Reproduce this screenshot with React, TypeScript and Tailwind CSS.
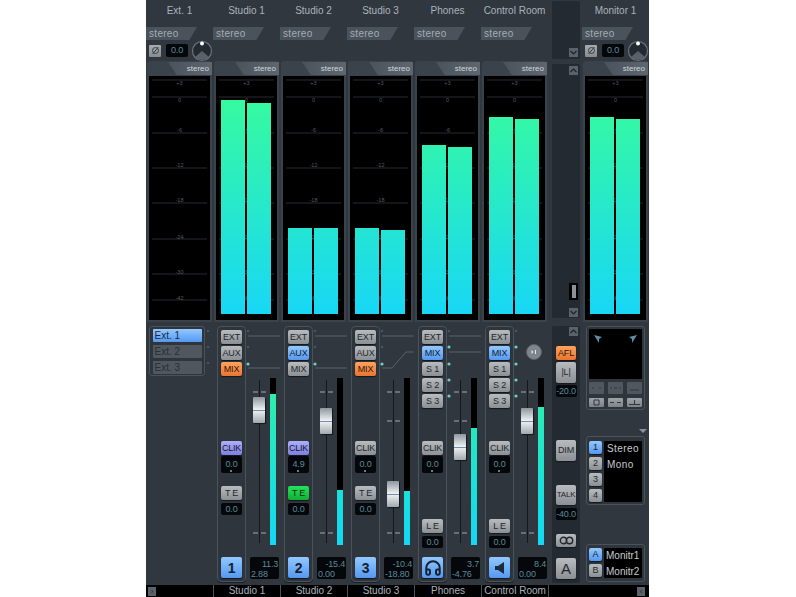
import { Headphones } from "lucide-react";
import type { ReactNode } from "react";

const FONT = "font-['Liberation_Sans',Arial,sans-serif]";

type Tone = "gray" | "blue" | "orange" | "violet" | "green" | "dim";

const tones: Record<Tone, string> = {
  gray: "bg-gradient-to-b from-[#b9bcbf] to-[#8b9094] text-[#23272b]",
  blue: "bg-gradient-to-b from-[#93c8ff] to-[#5498f0] text-[#14202e]",
  orange: "bg-gradient-to-b from-[#ffa25c] to-[#ea7430] text-[#2a1608]",
  violet: "bg-gradient-to-b from-[#adb0fa] to-[#7d80de] text-[#14142e]",
  green: "bg-gradient-to-b from-[#26e35c] to-[#10ae34] text-[#07300f]",
  dim: "bg-[#50575f] text-[#23282d]",
};

function Btn({ tone = "gray", className = "w-[21px] h-[14px]", children }: { tone?: Tone; className?: string; children?: ReactNode }) {
  return (
    <div className={`${tones[tone]} ${className} rounded-[2px] shadow-[0_1px_1px_#14181c] flex items-center justify-center text-[9px] leading-none tracking-[-0.2px] whitespace-nowrap`}>
      {children}
    </div>
  );
}

function Readout({ className = "w-[21px] h-[12px]", children }: { className?: string; children?: ReactNode }) {
  return (
    <div className={`${className} bg-[#05070a] rounded-[2px] text-[#5a8a9a] text-[9px] leading-none tracking-[-0.2px] flex items-center justify-center`}>
      {children}
    </div>
  );
}

function Chip() {
  return (
    <div className="w-[51px] h-[13px] bg-[#4a525b] [clip-path:polygon(0_0,100%_0,85%_100%,0_100%)] text-[#a4adb5] text-[10px] leading-[13px] pl-[3px] tracking-[0.3px]">
      stereo
    </div>
  );
}

function Knob() {
  return (
    <svg width="22" height="22" viewBox="0 0 22 22">
      <circle cx="11" cy="11" r="9.5" fill="#232a31" stroke="#6c747c" strokeWidth="1.2" />
      <path d="M11 11 L18 17 A9.5 9.5 0 0 1 4 17 Z" fill="#59616a" />
      <circle cx="11" cy="3.5" r="2" fill="#ffffff" />
    </svg>
  );
}

function GainRow() {
  return (
    <div className="flex items-center h-[21px] pl-[3px]">
      <div className="w-[12px] h-[12px] bg-gradient-to-b from-[#a9adb1] to-[#868b90] rounded-[1px] flex items-center justify-center">
        <svg width="9" height="9" viewBox="0 0 9 9" fill="none" stroke="#3a4046" strokeWidth="1">
          <circle cx="4.5" cy="4.5" r="3" />
          <path d="M1.5 8 L7.5 1" />
        </svg>
      </div>
      <Readout className="w-[22px] h-[13px] ml-[5px]">0.0</Readout>
      <div className="ml-[3px]">
        <Knob />
      </div>
    </div>
  );
}

// label, y of the grid line, y of the label centre
const scale: [string, number, number][] = [
  ["+3", 4, 7],
  ["0", 21, 24],
  ["-6", 57, 54],
  ["-12", 92, 89],
  ["-18", 127, 124],
  ["-24", 163, 161],
  ["-30", 198, 196],
  ["-42", 224, 222],
];

function MeterPanel({ id, left, right }: { id: string; left?: number; right?: number }) {
  // left/right are the y of the bar tops on the page
  const toY = (y: number) => y - 76;
  return (
    <div className="w-[65px] h-[261px] ml-[1px] bg-[#3a424b] rounded-t-[3px] flex flex-col">
      <div className="h-[15px] flex justify-end">
        <div className="w-[44px] h-[13px] mt-[1px] bg-gradient-to-r from-[#4a525b] to-[#5e666f] [clip-path:polygon(0_0,100%_0,100%_100%,20%_100%)] text-[#d0d6db] text-[8px] leading-[13px] text-right pr-[3px]">
          stereo
        </div>
      </div>
      <svg width="61" height="244" viewBox="0 0 61 244" className="ml-[2px] bg-black">
        <defs>
          <linearGradient id={id} gradientUnits="userSpaceOnUse" x1="0" y1="20" x2="0" y2="238">
            <stop offset="0" stopColor="#36fb9e" />
            <stop offset="1" stopColor="#18d7f6" />
          </linearGradient>
        </defs>
        {scale.map(([label, y, c]) => (
          <g key={label}>
            <line x1="3" x2="58" y1={y} y2={y} stroke="#262b30" />
            <text x="30.5" y={c + 2} textAnchor="middle" fontSize="5.5" fill="#555c63" fontFamily="Liberation Sans">
              {label}
            </text>
          </g>
        ))}
        {left !== undefined && <rect x="5" y={toY(left)} width="24" height={238 - toY(left)} fill={`url(#${id})`} />}
        {right !== undefined && <rect x="31" y={toY(right)} width="24" height={238 - toY(right)} fill={`url(#${id})`} />}
      </svg>
    </div>
  );
}

function Title({ children }: { children?: ReactNode }) {
  return <div className="h-[27px] pt-[4px] text-center text-[#aab3bb] text-[10px] leading-[13px]">{children}</div>;
}

type Route = { d: string }[];
type StripProps = {
  id: string;
  title: string;
  left: number;
  right: number;
  buttons: [string, Tone][];
  clik: Tone;
  clikValue: string;
  lower: [string, Tone];
  lowerValue: string;
  lowerGap: number;
  main: ReactNode;
  capY: number;
  meterY: number;
  extraTick?: boolean;
  top: string;
  bottom: string;
  routes: Route;
  dots: [number, boolean][];
  knob?: boolean;
};

function Strip(p: StripProps) {
  return (
    <div className="w-[67px] shrink-0 flex flex-col">
      <Title>{p.title}</Title>
      <Chip />
      <div className="h-[21px]" />
      <MeterPanel id={p.id} left={p.left} right={p.right} />
      <div className="flex h-[256px] mt-[4px]">
        <div className="w-[29px] ml-[4px] border border-[#4a525b] rounded-[4px] bg-[#2e353c] flex flex-col items-center pt-[3px] pb-[3px] shadow-[0_1px_0_#1c2126]">
          <div className="h-[111px] flex flex-col gap-[2px]">
            {p.buttons.map(([label, tone]) => (
              <Btn key={label} tone={tone}>
                {label}
              </Btn>
            ))}
          </div>
          <Btn tone={p.clik}>CLIK</Btn>
          <Readout className="w-[21px] h-[17px] mt-[1px] relative">
            {p.clikValue}
            <span className="absolute bottom-[1px] left-[9px] w-[2px] h-[2px] bg-[#9aa3ab] rounded-full" />
          </Readout>
          <div style={{ height: p.lowerGap }} />
          <Btn tone={p.lower[1]}>{p.lower[0]}</Btn>
          <Readout className="w-[21px] h-[12px] mt-[3px]">{p.lowerValue}</Readout>
          <Btn tone="blue" className="w-[21px] h-[21px] mt-auto">
            {p.main}
          </Btn>
        </div>
        <div className="w-[34px] flex flex-col">
          <svg width="34" height="50" viewBox="0 0 34 50" className="overflow-visible relative z-10" fill="none">
            {p.routes.map((r) => (
              <path key={r.d} d={r.d} stroke="#59626b" strokeWidth="1" />
            ))}
            {p.dots.map(([y, on]) => (
              <circle key={y} cx="2" cy={y} r={on ? 1.6 : 1.2} fill={on ? "#69d2c8" : "#4d5660"} />
            ))}
            {p.knob && (
              <g>
                <circle cx="20" cy="26" r="7.5" fill="#7e858c" stroke="#5a6168" />
                <path d="M17.5 24 v4 l2 -2 z M21 24 h1 v4 h-1 z" fill="#e4e8ea" />
              </g>
            )}
          </svg>
          <div className="relative flex h-[167px] mt-[2px]">
            <svg width="24" height="167" viewBox="0 0 24 167" fill="none">
              <line x1="13.5" x2="13.5" y1="2" y2="165" stroke="#14181c" />
              <path d="M7 14 h5 M15 14 h5 M7 155 h5 M15 155 h5" stroke="#a0a7ad" />
              {p.extraTick && <path d="M7 43 h5 M15 43 h5" stroke="#a0a7ad" />}
            </svg>
            <div className="w-[6px] h-[167px] bg-black">
              <div
                className="w-[6px] bg-gradient-to-b from-[#30f0a4] to-[#14d8f4] bg-[length:100%_167px] bg-bottom"
                style={{ height: 545 - p.meterY, marginTop: p.meterY - 378 }}
              />
            </div>
            <div
              className="absolute left-[7px] w-[12px] h-[26px] rounded-[1px] shadow-[1px_1px_1px_#14181c] bg-gradient-to-b from-[#8f979e] via-[#f2f4f5] to-[#a2a9af] flex items-center"
              style={{ top: p.capY - 378 }}
            >
              <div className="w-full h-[1px] bg-[#6f8fb2]" />
            </div>
          </div>
          <div className="w-[29px] h-[22px] ml-[4px] mt-[12px] bg-[#05070a] rounded-[2px] text-[#5a8a9a] text-[9px] leading-[10px] tracking-[-0.2px] px-[1px] pt-[2px]">
            <div className="text-right">{p.top}</div>
            <div>{p.bottom}</div>
          </div>
        </div>
      </div>
    </div>
  );
}

const line1 = "M2 10 H34";
const line2 = "M2 42 H34";

function ExtColumn() {
  return (
    <div className="w-[67px] shrink-0 flex flex-col">
      <Title>Ext. 1</Title>
      <Chip />
      <GainRow />
      <MeterPanel id="m-ext" />
      <div className="flex h-[256px] mt-[4px]">
        <div className="w-[56px] h-[50px] ml-[3px] border border-[#4a525b] rounded-[3px] bg-[#2e353c] flex flex-col gap-[3px] items-center pt-[2px]">
          <div className="w-[49px] h-[13px] rounded-[1px] bg-gradient-to-b from-[#93c8ff] to-[#5498f0] text-[#1b2a3c] text-[10px] leading-[13px] pl-[2px]">Ext. 1</div>
          <div className="w-[49px] h-[13px] rounded-[1px] bg-[#50575f] text-[#2a2f34] text-[10px] leading-[13px] pl-[2px]">Ext. 2</div>
          <div className="w-[49px] h-[13px] rounded-[1px] bg-[#50575f] text-[#2a2f34] text-[10px] leading-[13px] pl-[2px]">Ext. 3</div>
        </div>
        <div className="flex flex-col gap-[14px] pt-[4px] pl-[2px]">
          <div className="w-[2px] h-[2px] bg-[#4d5660]" />
          <div className="w-[2px] h-[2px] bg-[#4d5660]" />
          <div className="w-[2px] h-[2px] bg-[#4d5660]" />
        </div>
      </div>
    </div>
  );
}

function Chevron({ up }: { up?: boolean }) {
  return (
    <div className="w-[9px] h-[9px] bg-[#5a626b] flex items-center justify-center">
      <svg width="7" height="5" viewBox="0 0 7 5" fill="none" stroke="#1f2429" strokeWidth="1.2">
        <path d={up ? "M0.5 4 L3.5 1 L6.5 4" : "M0.5 1 L3.5 4 L6.5 1"} />
      </svg>
    </div>
  );
}

function MiddleColumn() {
  return (
    <div className="w-[34px] shrink-0 flex flex-col pl-[4px]">
      <div className="w-[28px] h-[58px] mt-[1px] bg-[#232a31] rounded-[2px] flex flex-col items-end justify-end pr-[2px] pb-[2px]">
        <Chevron />
      </div>
      <div className="w-[28px] h-[254px] mt-[5px] bg-[#232a31] rounded-[2px] flex flex-col items-end pr-[2px] pt-[2px] pb-[1px]">
        <Chevron up />
        <div className="w-[9px] h-[17px] mt-[208px] bg-black flex items-center justify-center">
          <div className="w-[4px] h-[13px] bg-[#8b9299]" />
        </div>
        <div className="mt-auto">
          <Chevron />
        </div>
      </div>
      <div className="w-[28px] h-[257px] mt-[8px] bg-[#232a31] rounded-[2px] flex flex-col items-center">
        <div className="w-full flex justify-end pr-[2px] pt-[1px]">
          <Chevron up />
        </div>
        <Btn tone="orange" className="w-[20px] h-[14px] mt-[10px]">
          AFL
        </Btn>
        <Btn className="w-[20px] h-[21px] mt-[2px]">|L|</Btn>
        <Readout className="w-[21px] h-[12px] mt-[2px]">-20.0</Readout>
        <Btn className="w-[20px] h-[21px] mt-[43px]">DIM</Btn>
        <Btn className="w-[20px] h-[20px] mt-[24px] !text-[8px]">TALK</Btn>
        <Readout className="w-[21px] h-[12px] mt-[3px]">-40.0</Readout>
        <Btn className="w-[20px] h-[13px] mt-[14px]">
          <svg width="15" height="9" viewBox="0 0 15 9" fill="none" stroke="#23272b" strokeWidth="1.4">
            <circle cx="4.5" cy="4.5" r="3.2" />
            <circle cx="10.5" cy="4.5" r="3.2" />
          </svg>
        </Btn>
        <Btn className="w-[20px] h-[21px] mt-[11px] !text-[15px]">A</Btn>
      </div>
    </div>
  );
}

function MiniBtn({ path, tall }: { path?: string; tall?: boolean }) {
  return (
    <div className={`w-[15px] ${tall ? "h-[12px] bg-[#50575f]" : "h-[9px] bg-gradient-to-b from-[#9ea3a8] to-[#7d8388]"} rounded-[1px] flex items-center justify-center`}>
      <svg width="13" height="7" viewBox="0 0 13 7" fill="none" stroke="#30363c" strokeWidth="1">
        <path d={path} />
      </svg>
    </div>
  );
}

function MonitorColumn() {
  return (
    <div className="w-[67px] shrink-0 flex flex-col">
      <Title>Monitor 1</Title>
      <Chip />
      <GainRow />
      <MeterPanel id="m-mon" left={117} right={119} />
      <div className="h-[256px] mt-[4px] ml-[4px] flex flex-col">
        <div className="w-[59px] h-[84px] border border-[#4a525b] rounded-[3px] bg-[#2e353c] p-[2px] flex flex-col">
          <div className="w-[53px] h-[51px] bg-black rounded-[1px] flex justify-between px-[5px] pt-[6px]">
            <svg width="9" height="9" viewBox="0 0 9 9" fill="#5e8fa3">
              <path d="M0 0 L8 2 L5 4 L5 8 Z" />
            </svg>
            <svg width="9" height="9" viewBox="0 0 9 9" fill="#5e8fa3">
              <path d="M9 0 L1 2 L4 4 L4 8 Z" />
            </svg>
          </div>
          <div className="flex justify-between mt-[3px]">
            <MiniBtn tall path="M2 3 h2 M9 3 h2" />
            <MiniBtn tall path="M1 3 h2 M5 3 h3 M10 3 h2" />
            <MiniBtn tall path="M2 5 h9" />
          </div>
          <div className="flex justify-between mt-[4px]">
            <MiniBtn path="M4 1 h5 v5 h-5 z" />
            <MiniBtn path="M1 3.5 h4 M8 3.5 h4" />
            <MiniBtn path="M1 5.5 h11 M6.5 1 v4" />
          </div>
        </div>
        <div className="h-[26px] flex items-end justify-end pr-[2px] pb-[3px]">
          <div className="w-0 h-0 border-x-[4px] border-x-transparent border-t-[4px] border-t-[#8a9299]" />
        </div>
        <div className="w-[59px] h-[69px] border border-[#4a525b] rounded-[3px] bg-[#2e353c] flex pl-[2px] pt-[4px]">
          <div className="flex flex-col gap-[3px]">
            <Btn tone="blue" className="w-[13px] h-[13px]">1</Btn>
            <Btn className="w-[13px] h-[13px]">2</Btn>
            <Btn className="w-[13px] h-[13px]">3</Btn>
            <Btn className="w-[13px] h-[13px]">4</Btn>
          </div>
          <div className="w-[38px] h-[61px] ml-[2px] bg-black rounded-[1px] text-[#c6ccd1] text-[10px] leading-[16px] pl-[3px] tracking-[0.4px]">
            <div>Stereo</div>
            <div>Mono</div>
          </div>
        </div>
        <div className="w-[59px] h-[38px] mt-[39px] border border-[#4a525b] rounded-[3px] bg-[#2e353c] flex pl-[2px] pt-[3px]">
          <div className="flex flex-col gap-[3px]">
            <Btn tone="blue" className="w-[13px] h-[13px]">A</Btn>
            <Btn className="w-[13px] h-[13px]">B</Btn>
          </div>
          <div className="w-[38px] h-[30px] ml-[2px] bg-black rounded-[1px] text-[#c6ccd1] text-[10px] leading-[16px] pl-[2px]">
            <div>Monitr1</div>
            <div>Monitr2</div>
          </div>
        </div>
      </div>
    </div>
  );
}

const dotsStudio: [number, boolean][] = [
  [5, false],
  [21, false],
  [38, true],
];
const dotsMonitor: [number, boolean][] = [
  [5, false],
  [21, true],
  [38, true],
  [54, true],
  [70, true],
];

const btn = (...list: [string, Tone][]) => list;

const strips: StripProps[] = [
  {
    id: "m-1", title: "Studio 1", left: 100, right: 103,
    buttons: btn(["EXT", "gray"], ["AUX", "gray"], ["MIX", "orange"]),
    clik: "violet", clikValue: "0.0", lower: ["T E", "gray"], lowerValue: "0.0", lowerGap: 13,
    main: <span className="text-[14px] font-bold">1</span>, capY: 397, meterY: 394, top: "11.3", bottom: "2.88",
    routes: [{ d: line1 }, { d: line2 }], dots: dotsStudio,
  },
  {
    id: "m-2", title: "Studio 2", left: 228, right: 228,
    buttons: btn(["EXT", "gray"], ["AUX", "blue"], ["MIX", "gray"]),
    clik: "violet", clikValue: "4.9", lower: ["T E", "green"], lowerValue: "0.0", lowerGap: 13,
    main: <span className="text-[14px] font-bold">2</span>, capY: 408, meterY: 490, top: "-15.4", bottom: "0.00",
    routes: [{ d: line1 }, { d: line2 }], dots: dotsStudio,
  },
  {
    id: "m-3", title: "Studio 3", left: 228, right: 230,
    buttons: btn(["EXT", "gray"], ["AUX", "gray"], ["MIX", "orange"]),
    clik: "gray", clikValue: "0.0", lower: ["T E", "gray"], lowerValue: "0.0", lowerGap: 13,
    main: <span className="text-[14px] font-bold">3</span>, capY: 481, meterY: 491, extraTick: true, top: "-10.4", bottom: "-18.80",
    routes: [{ d: line1 }, { d: "M2 42 H12 L26 26 H34" }], dots: dotsStudio,
  },
  {
    id: "m-4", title: "Phones", left: 145, right: 147,
    buttons: btn(["EXT", "gray"], ["MIX", "blue"], ["S 1", "gray"], ["S 2", "gray"], ["S 3", "gray"]),
    clik: "gray", clikValue: "0.0", lower: ["L E", "gray"], lowerValue: "0.0", lowerGap: 46,
    main: <Headphones size={18} strokeWidth={2.6} />, capY: 434, meterY: 428, extraTick: true, top: "3.7", bottom: "-4.76",
    routes: [{ d: line1 }, { d: "M2 26 H34" }], dots: dotsMonitor,
  },
  {
    id: "m-5", title: "Control Room", left: 117, right: 119,
    buttons: btn(["EXT", "gray"], ["MIX", "blue"], ["S 1", "gray"], ["S 2", "gray"], ["S 3", "gray"]),
    clik: "gray", clikValue: "0.0", lower: ["L E", "gray"], lowerValue: "0.0", lowerGap: 46,
    main: (
      <svg width="12" height="14" viewBox="0 0 12 14" fill="#1c2a3a">
        <path d="M1 5 H4 L10 1 V13 L4 9 H1 Z" />
      </svg>
    ),
    capY: 408, meterY: 407, top: "8.4", bottom: "0.00",
    routes: [], dots: dotsMonitor, knob: true,
  },
];

export default function App() {
  return (
    <div className={`w-[796px] h-[597px] bg-white ${FONT}`}>
      <div className="w-[503px] h-[597px] ml-[146px] bg-[#30373f] flex flex-col overflow-hidden">
        <div className="flex h-[585px]">
          <ExtColumn />
          {strips.map((s) => (
            <Strip key={s.id} {...s} />
          ))}
          <MiddleColumn />
          <MonitorColumn />
        </div>
        <div className="h-[12px] bg-black flex items-center text-[#aab3bb] text-[10px] leading-none">
          <div className="w-[67px] h-full pl-[2px] flex items-center">
            <div className="w-[8px] h-[9px] bg-[#5a626b] text-[#1f2429] text-[8px] leading-[9px] text-center">›</div>
          </div>
          {strips.map((s) => (
            <div key={s.id} className="w-[67px] h-full border-l border-[#4a525b] flex items-center justify-center">
              {s.title}
            </div>
          ))}
          <div className="flex-1 h-full border-l border-[#4a525b] flex items-center justify-end pr-[4px]">
            <div className="w-[8px] h-[9px] bg-[#5a626b] text-[#1f2429] text-[8px] leading-[9px] text-center">‹</div>
          </div>
        </div>
      </div>
    </div>
  );
}
